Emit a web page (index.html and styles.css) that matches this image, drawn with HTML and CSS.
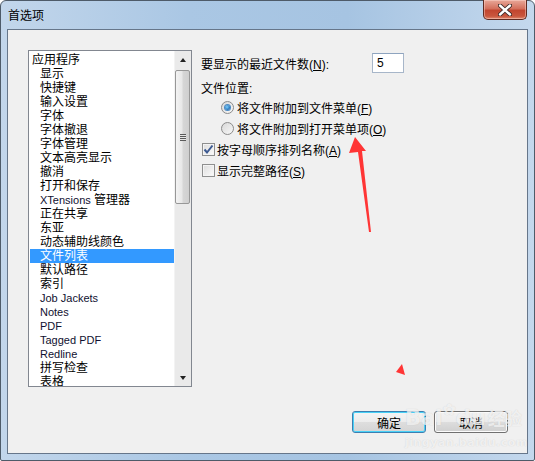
FILE: index.html
```html
<!DOCTYPE html>
<html lang="zh-CN">
<head>
  <meta charset="UTF-8">
  <title>首选项</title>
  <link rel="stylesheet" href="styles.css">
</head>
<body>
  <div class="window">
    <div class="titlebar">
      <span class="title">首选项</span>
      <button class="close-btn" aria-label="关闭">
        <svg width="14" height="12" viewBox="0 0 14 12">
          <path d="M2 1.5 L12 10.5 M12 1.5 L2 10.5" stroke="#3b2a28" stroke-width="4.2" stroke-linecap="round"/>
          <path d="M2 1.5 L12 10.5 M12 1.5 L2 10.5" stroke="#ffffff" stroke-width="2.4" stroke-linecap="round"/>
        </svg>
      </button>
    </div>

    <div class="client">
      <div class="main">
        <div class="listbox">
          <ul class="tree">
            <li class="root">应用程序</li>
            <li>显示</li>
            <li>快捷键</li>
            <li>输入设置</li>
            <li>字体</li>
            <li>字体撤退</li>
            <li>字体管理</li>
            <li>文本高亮显示</li>
            <li>撤消</li>
            <li>打开和保存</li>
            <li><span class="en">XTensions</span> 管理器</li>
            <li>正在共享</li>
            <li>东亚</li>
            <li>动态辅助线颜色</li>
            <li class="selected">文件列表</li>
            <li>默认路径</li>
            <li>索引</li>
            <li class="en">Job Jackets</li>
            <li class="en">Notes</li>
            <li class="en">PDF</li>
            <li class="en">Tagged PDF</li>
            <li class="en">Redline</li>
            <li>拼写检查</li>
            <li>表格</li>
          </ul>
          <div class="scrollbar">
            <div class="sb-btn"><span class="tri up"></span></div>
            <div class="sb-track">
              <div class="sb-thumb"><span class="grip"></span></div>
            </div>
            <div class="sb-btn"><span class="tri down"></span></div>
          </div>
        </div>

        <div class="settings">
          <div class="count-row">
            <span class="count-label">要显示的最近文件数(<u>N</u>):</span>
            <span class="textbox">5</span>
          </div>
          <div class="group-label">文件位置:</div>
          <div class="option radio-row">
            <span class="radio checked"></span>
            <span>将文件附加到文件菜单(<u>F</u>)</span>
          </div>
          <div class="option radio-row">
            <span class="radio"></span>
            <span>将文件附加到打开菜单项(<u>O</u>)</span>
          </div>
          <div class="option check-row">
            <span class="checkbox checked">
              <svg width="11" height="11" viewBox="0 0 11 11">
                <path d="M1.5 5.5 L4 8.5 L9.5 1.5" fill="none" stroke="#3c5a92" stroke-width="2"/>
              </svg>
            </span>
            <span>按字母顺序排列名称(<u>A</u>)</span>
          </div>
          <div class="option check-row">
            <span class="checkbox"></span>
            <span>显示完整路径(<u>S</u>)</span>
          </div>
        </div>
      </div>

      <div class="buttons">
        <button class="btn btn-default">确定</button>
        <button class="btn">取消</button>
      </div>
    </div>

    <!-- red annotation drawn over the dialog -->
    <svg class="annotation" width="535" height="461" viewBox="0 0 535 461">
      <polygon points="355,137 366,151 362,151 371,232 369,232 358,152 349,153" fill="#ff3535"/>
      <polygon points="396,372 402,364 405,375" fill="#ff3535"/>
    </svg>

    <div class="watermark">
      <div class="wm-logo">Bai<span class="paw">&#10047;</span>du<span class="wm-cn">经验</span></div>
      <div class="wm-url">jingyan.baidu.com</div>
    </div>
  </div>
</body>
</html>
```

FILE: styles.css
```css
body {
  margin: 0;
  width: 535px;
  height: 461px;
  overflow: hidden;
  font-family: "Liberation Sans", "Noto Sans CJK SC", sans-serif;
  font-size: 12px;
  color: #000;
}

.window {
  position: relative;
  box-sizing: border-box;
  width: 535px;
  height: 461px;
  display: flex;
  flex-direction: column;
  padding: 0 6px 6px;
  border: 1px solid #4e5b69;
  border-radius: 6px 6px 2px 2px;
  background: linear-gradient(to right, #c2d6eb 0%, #aac7e4 35%, #a6c4e2 65%, #c4d8ed 100%);
}

/* title bar */
.titlebar {
  height: 28px;
  display: flex;
  align-items: center;
}
.title {
  padding-left: 1px;
  padding-bottom: 1px;
}
.close-btn {
  align-self: flex-start;
  margin: -1px 1px 0 auto;
  width: 44px;
  height: 20px;
  padding: 0;
  display: flex;
  align-items: center;
  justify-content: center;
  border: 1px solid #5e2a22;
  border-top: none;
  border-radius: 0 0 5px 5px;
  background: linear-gradient(to bottom, #e8a899 0%, #d4705d 45%, #c24630 55%, #c9563d 85%, #e08a70 100%);
  box-shadow: inset 0 0 0 1px rgba(255, 220, 210, 0.45);
}

/* dialog body */
.client {
  flex: 1;
  display: flex;
  flex-direction: column;
  padding: 20px 19px 20px 20px;
  border: 1px solid #66768a;
  background-color: #f0f0f0;
}
.main {
  display: flex;
  gap: 9px;
}

/* tree list */
.listbox {
  box-sizing: border-box;
  width: 164px;
  height: 337px;
  display: flex;
  border: 1px solid #828790;
  background-color: #fff;
  overflow: hidden;
}
.tree {
  flex: 1;
  margin: 0;
  padding: 2px 0 0;
  list-style: none;
  overflow: hidden;
}
.tree li {
  height: 14px;
  line-height: 14px;
  margin-left: 1px;
  padding-left: 10px;
  white-space: nowrap;
}
.tree li.root {
  padding-left: 2px;
}
.tree li.selected {
  background-color: #3399ff;
  color: #fff;
}
.tree .en {
  font-size: 11px;
  color: #101030;
}

.scrollbar {
  width: 17px;
  display: flex;
  flex-direction: column;
  background-color: #eaeaea;
  border-left: 1px solid #f3f3f3;
  box-sizing: border-box;
}
.sb-btn {
  height: 17px;
  display: flex;
  align-items: center;
  justify-content: center;
}
.tri {
  width: 0;
  height: 0;
  border-left: 3.5px solid transparent;
  border-right: 3.5px solid transparent;
}
.tri.up {
  border-bottom: 4px solid #222;
}
.tri.down {
  border-top: 4px solid #222;
}
.sb-track {
  flex: 1;
}
.sb-thumb {
  box-sizing: border-box;
  width: 15px;
  height: 134px;
  margin-top: 2px;
  display: flex;
  align-items: center;
  justify-content: center;
  border: 1px solid #979797;
  border-radius: 2px;
  background: linear-gradient(to right, #f3f3f3 0%, #e8e8e8 45%, #d6d6d6 55%, #cfcfcf 100%);
}
.grip {
  width: 6px;
  height: 7px;
  background: repeating-linear-gradient(to bottom, #5a5a5a 0, #5a5a5a 1px, #e6e6e6 1px, #e6e6e6 2px);
}

/* settings panel */
.settings {
  flex: 1;
}
.count-row {
  margin-top: 3px;
  height: 20px;
  display: flex;
  align-items: center;
}
.count-label {
  width: 171px;
}
.textbox {
  box-sizing: border-box;
  width: 32px;
  height: 20px;
  line-height: 18px;
  padding-left: 4px;
  border: 1px solid #a7b6c9;
  border-top-color: #8ea4bf;
  background-color: #fff;
}
.group-label {
  margin-top: 9px;
  height: 15px;
  line-height: 15px;
}
.option {
  height: 21px;
  display: flex;
  align-items: center;
}
.radio-row {
  padding-left: 20px;
  gap: 3px;
}
.check-row {
  padding-left: 1px;
  gap: 2px;
}
.radio {
  box-sizing: border-box;
  width: 13px;
  height: 13px;
  display: flex;
  align-items: center;
  justify-content: center;
  border: 1px solid #8b8b8b;
  border-radius: 50%;
  background: linear-gradient(135deg, #d8d8d8, #f8f8f8);
}
.radio.checked::after {
  content: "";
  width: 5px;
  height: 5px;
  border-radius: 50%;
  background: radial-gradient(circle at 40% 40%, #7fd0fb 0%, #2a7cc2 60%, #17477f 100%);
  box-shadow: 0 0 0 1px #4b8ac4;
}
.checkbox {
  box-sizing: border-box;
  width: 13px;
  height: 13px;
  display: flex;
  align-items: center;
  justify-content: center;
  border: 1px solid #8e8f8f;
  background: linear-gradient(135deg, #dcdcdc, #fcfcfc);
  box-shadow: inset 0 0 0 1px #f4f4f4;
}

/* bottom buttons */
.buttons {
  margin-top: auto;
  display: flex;
  justify-content: flex-end;
  gap: 8px;
}
.btn {
  width: 74px;
  height: 22px;
  padding: 0;
  font-family: inherit;
  font-size: 12px;
  color: #000;
  border: 1px solid #707070;
  border-radius: 3px;
  background: linear-gradient(to bottom, #f2f2f2 0%, #ebebeb 50%, #dddddd 51%, #cfcfcf 100%);
  box-shadow: inset 0 0 0 1px #fcfcfc;
}
.btn-default {
  border-color: #3c7fb1;
  box-shadow: inset 0 0 0 1px #48d1f7;
  background: linear-gradient(to bottom, #f4f4f4 0%, #ececec 50%, #dedede 51%, #d4d4d4 100%);
}

/* overlays */
.annotation {
  position: absolute;
  left: -1px;
  top: -1px;
  pointer-events: none;
}
.watermark {
  position: absolute;
  left: 404px;
  top: 392px;
  color: rgba(255, 255, 255, 0.7);
  text-shadow: 0 0 1px rgba(120, 120, 120, 0.3);
  pointer-events: none;
}
.wm-logo {
  font-family: "DejaVu Sans", sans-serif;
  font-size: 21px;
  font-weight: bold;
  line-height: 34px;
  white-space: nowrap;
}
.paw {
  font-size: 16px;
  vertical-align: 10px;
}
.wm-cn {
  font-family: "Noto Sans CJK SC", sans-serif;
  font-size: 17px;
  margin-left: 2px;
}
.wm-url {
  font-family: "DejaVu Sans", sans-serif;
  font-size: 11px;
  font-weight: bold;
  margin-top: 1px;
  letter-spacing: 0.5px;
}
```
